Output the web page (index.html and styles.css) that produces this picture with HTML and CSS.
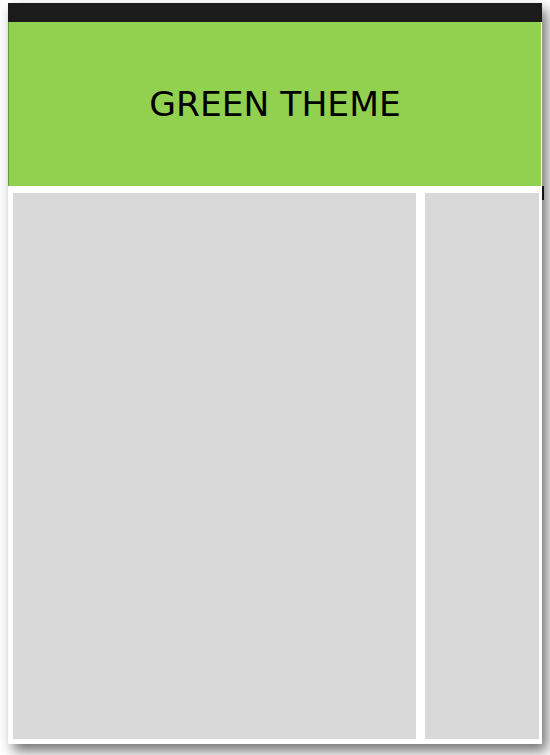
FILE: index.html
```html
<!DOCTYPE html>
<html lang="en">
	<head>
		<meta charset="UTF-8" />
		<meta name="viewport" content="width=device-width, initial-scale=1.0" />
		<title>Green Theme</title>
		<link rel="stylesheet" href="styles.css">
	</head>
	<body>
		<div class="page">
			<div class="topbar"></div>
			<header class="banner">
				<h1>GREEN THEME</h1>
			</header>
			<div class="columns">
				<div class="main"></div>
				<div class="side"></div>
			</div>
		</div>
	</body>
</html>
```

FILE: styles.css
```css
html,
body {
	margin: 0;
	padding: 0;
	background-color: #fff;
}
body {
	font-family: 'DejaVu Sans', Verdana, sans-serif;
	padding: 3px 0 0 8px;
	border-left: 1px solid #e6e6e6;
	margin-left: -1px;
	height: 752px;
	overflow: hidden;
}
.page {
	position: relative;
	width: 534px;
	background-color: #fff;
	box-shadow: 5px 7px 12px rgba(0, 0, 0, 0.55);
}
.page::after {
	content: '';
	position: absolute;
	left: 534px;
	top: 183px;
	width: 2px;
	height: 14px;
	background-color: #111;
}
.topbar {
	height: 19px;
	background-color: #1b1b1b;
}
.banner {
	height: 164px;
	background-color: #92d050;
	border-left: 1px solid #6a9a3a;
	margin-right: 1px;
	display: flex;
	align-items: center;
	justify-content: center;
}
.banner h1 {
	margin: 0;
	font-weight: normal;
	font-size: 34.5px;
	color: #000;
}
.columns {
	display: flex;
	gap: 9px;
	padding: 7px 3px 5px 5px;
}
.main,
.side {
	height: 546px;
	background-color: #d9d9d9;
}
.main {
	width: 403px;
}
.side {
	flex: 1;
}
```
